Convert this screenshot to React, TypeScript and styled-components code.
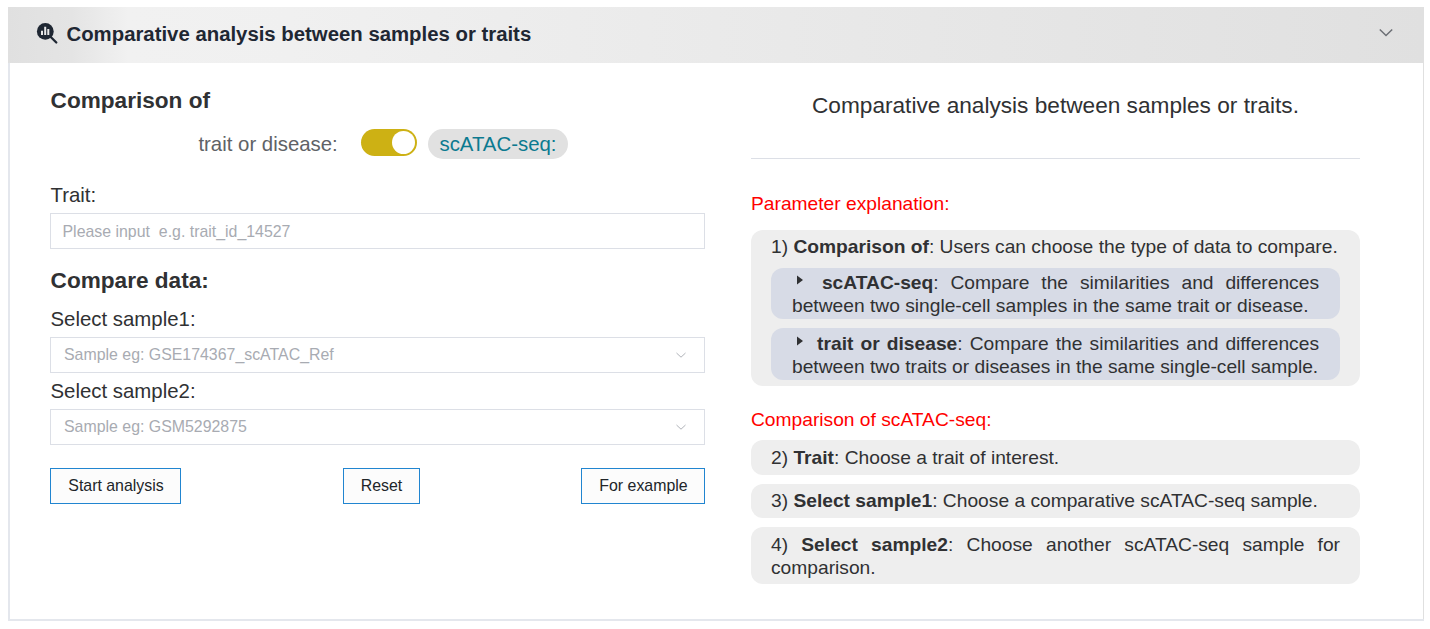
import React, { useState } from "react";
import styled, { createGlobalStyle } from "styled-components";

const GlobalStyle = createGlobalStyle`
  * { box-sizing: border-box; }
  body {
    margin: 0;
    background: #fff;
    color: #303133;
    font-family: "Liberation Sans", Arial, sans-serif;
  }
`;

const Page = styled.div`
  padding: 7px 6px 8px 8px;
`;

const Card = styled.section`
  height: 614px;
  border-bottom: 2px solid #e4e7ed;
`;

const CardHeader = styled.header`
  display: flex;
  align-items: center;
  height: 56px;
  padding: 0 30.5px 0 28px;
  background: linear-gradient(to right, #e0e0e0, #e4e4e4 4.5%, #f1f1f1 8.5%, #f0f0f0 20%, #e0e0e0);
`;

const CardTitle = styled.h1`
  flex: 1;
  margin: 0 0 2px 8.5px;
  font-size: 20.35px;
  line-height: 24px;
  color: #1f2733;
`;

const HeaderIcon = styled.svg`
  margin-bottom: 2px;
`;

const HeaderChevron = styled.svg`
  margin-bottom: 5px;
`;

const Columns = styled.div`
  display: flex;
  gap: 46px;
  height: 556px;
  padding: 0 63px 0 40px;
  border-left: 2px solid #e4e7ed;
  border-right: 1px solid #e0e0e0;
`;

const Form = styled.div`
  width: 655px;
`;

const Heading = styled.h2<{ $top: number }>`
  margin: ${(p) => p.$top}px 0 0 0.6px;
  font-size: 22.6px;
  line-height: 28px;
`;

const SwitchRow = styled.div`
  display: flex;
  align-items: center;
  height: 30px;
  margin-top: 14px;
  padding-left: 148px;
  font-size: 20.4px;
`;

const MutedLabel = styled.span`
  width: 163px;
  padding-left: 0.4px;
  color: #606266;
`;

const Switch = styled.button`
  display: flex;
  justify-content: flex-end;
  align-items: center;
  width: 56px;
  height: 27px;
  margin: 0 11px 3px 0;
  padding: 0 2px;
  border: 0;
  border-radius: 14px;
  background: #cdb114;
`;

const Knob = styled.span`
  width: 23px;
  height: 23px;
  border-radius: 50%;
  background: #fff;
`;

const Pill = styled.span`
  width: 140px;
  height: 30px;
  border-radius: 15px;
  background: #e1e1e1;
  color: #0c7a90;
  line-height: 30px;
  text-align: center;
`;

const Label = styled.label<{ $top: number }>`
  display: block;
  margin: ${(p) => p.$top}px 0 0 0.5px;
  font-size: 20.4px;
  line-height: 24px;
`;

const Field = styled.div<{ $top: number; $inset: number; $drop?: number }>`
  display: flex;
  align-items: center;
  justify-content: space-between;
  height: 36px;
  margin-top: ${(p) => p.$top}px;
  padding: ${(p) => p.$drop ?? 0}px 17px 0 ${(p) => p.$inset}px;
  border: 1px solid #dcdfe6;
  color: #a8abb2;
  font-size: 15.9px;
  white-space: pre;
`;

const Buttons = styled.div`
  display: flex;
  justify-content: space-between;
  margin-top: 23px;
`;

const Button = styled.button<{ $width: number }>`
  width: ${(p) => p.$width}px;
  height: 36px;
  padding: 0 0 1px 1px;
  border: 1px solid #2185d0;
  background: #fcfcfc;
  color: #212529;
  font: 15.9px "Liberation Sans", Arial, sans-serif;
`;

const Help = styled.div`
  width: 609px;
  font-size: 19.22px;
  line-height: 23px;
`;

const HelpTitle = styled.p`
  height: 96px;
  margin: 0;
  padding-top: 28px;
  border-bottom: 1px solid #dcdfe6;
  font-size: 22.65px;
  line-height: 28px;
  text-align: center;
`;

const RedTitle = styled.p<{ $top: number; $bottom: number }>`
  margin: ${(p) => p.$top}px 0 ${(p) => p.$bottom}px;
  color: #f00;
`;

const Note = styled.div<{ $height: number; $gap?: number; $pad?: number }>`
  height: ${(p) => p.$height}px;
  margin-bottom: ${(p) => p.$gap ?? 9}px;
  padding: ${(p) => p.$pad ?? 6}px 20px 0;
  border-radius: 12px;
  background: #eee;
  text-align: justify;
`;

const SubNote = styled.div<{ $height: number; $top: number; $pad: number }>`
  height: ${(p) => p.$height}px;
  margin-top: ${(p) => p.$top}px;
  padding: ${(p) => p.$pad}px 21px 0;
  border-radius: 12px;
  background: #d7dbe6;
`;

const Bullet = styled.svg`
  margin: 0 7px 4px 4px;
`;

const SelectArrow = () => (
  <svg width="12" height="8" viewBox="0 0 12 8" fill="none" stroke="#b0b3b9" strokeWidth="1">
    <path d="M1.500 2 6 6.200 10.500 2" />
  </svg>
);

const Arrow = () => (
  <Bullet width="7" height="10" viewBox="0 0 7 10" fill="#303133">
    <path d="M1 0.500 7 5 1 9.500z" />
  </Bullet>
);

const SearchChart = () => (
  <HeaderIcon width="22" height="22" viewBox="0 0 22 22">
    <circle cx="9.300" cy="8.400" r="8.400" fill="#1f2733" />
    <path d="m14.500 13.700 5.800 5.800" stroke="#1f2733" strokeWidth="2.300" strokeLinecap="round" />
    <path d="M6 7.700v4.400M9.200 3.700v8.400M12.300 6v6.100" stroke="#e8e8e8" strokeWidth="2" />
  </HeaderIcon>
);

export default function App() {
  const [open] = useState(true);
  return (
    <Page>
      <GlobalStyle />
      <Card>
        <CardHeader>
          <SearchChart />
          <CardTitle>Comparative analysis between samples or traits</CardTitle>
          <HeaderChevron width="16" height="10" viewBox="0 0 16 10" fill="none" stroke="#6c6f75" strokeWidth="1.500">
            <path d="m1.800 1.500 6.200 6 6.200-6" />
          </HeaderChevron>
        </CardHeader>
        {open && (
          <Columns>
            <Form>
              <Heading $top={24}>Comparison of</Heading>
              <SwitchRow>
                <MutedLabel>trait or disease:</MutedLabel>
                <Switch aria-label="Comparison type"><Knob /></Switch>
                <Pill>scATAC-seq:</Pill>
              </SwitchRow>
              <Label $top={24}>Trait:</Label>
              <Field $top={6} $inset={11.5} $drop={1}>Please input  e.g. trait_id_14527</Field>
              <Heading $top={18}>Compare data:</Heading>
              <Label $top={12}>Select sample1:</Label>
              <Field $top={6} $inset={13}>Sample eg: GSE174367_scATAC_Ref<SelectArrow /></Field>
              <Label $top={6}>Select sample2:</Label>
              <Field $top={6} $inset={13}>Sample eg: GSM5292875<SelectArrow /></Field>
              <Buttons>
                <Button $width={131}>Start analysis</Button>
                <Button $width={77}>Reset</Button>
                <Button $width={124}>For example</Button>
              </Buttons>
            </Form>
            <Help>
              <HelpTitle>Comparative analysis between samples or traits.</HelpTitle>
              <RedTitle $top={33} $bottom={15}>Parameter explanation:</RedTitle>
              <Note $height={156} $gap={22} $pad={5}>
                1) <b>Comparison of</b>: Users can choose the type of data to compare.
                <SubNote $height={51} $top={10} $pad={3}>
                  <Arrow /> <b>scATAC-seq</b>: Compare the similarities and differences between two single-cell samples in the same trait or disease.
                </SubNote>
                <SubNote $height={52} $top={9} $pad={4}>
                  <Arrow /> <b>trait or disease</b>: Compare the similarities and differences between two traits or diseases in the same single-cell sample.
                </SubNote>
              </Note>
              <RedTitle $top={0} $bottom={9}>Comparison of scATAC-seq:</RedTitle>
              <Note $height={35}>2) <b>Trait</b>: Choose a trait of interest.</Note>
              <Note $height={34} $pad={5}>3) <b>Select sample1</b>: Choose a comparative scATAC-seq sample.</Note>
              <Note $height={57}>4) <b>Select sample2</b>: Choose another scATAC-seq sample for comparison.</Note>
            </Help>
          </Columns>
        )}
      </Card>
    </Page>
  );
}
